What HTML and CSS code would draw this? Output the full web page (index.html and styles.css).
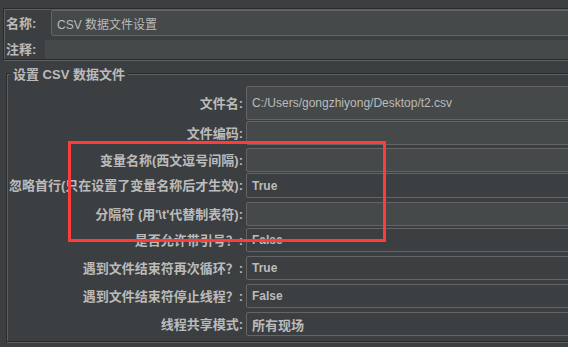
FILE: index.html
```html
<!DOCTYPE html>
<html lang="zh">
<head>
<meta charset="utf-8">
<title>CSV 数据文件设置</title>
<link rel="stylesheet" href="styles.css">
</head>
<body>
<div class="page">
  <div class="head">
    <div class="head-row name-row">
      <span class="head-lbl name-lbl">名称:</span>
      <div class="field text name-field">CSV 数据文件设置</div>
    </div>
    <div class="head-row note-row">
      <span class="head-lbl note-lbl">注释:</span>
      <div class="field note-field"></div>
    </div>
  </div>

  <div class="group">
    <div class="group-title">设置 CSV 数据文件</div>
    <div class="row r1"><span class="lbl">文件名:</span><div class="field text">C:/Users/gongzhiyong/Desktop/t2.csv</div></div>
    <div class="row r2"><span class="lbl">文件编码:</span><div class="field text"></div></div>
    <div class="row r3"><span class="lbl">变量名称(西文逗号间隔):</span><div class="field text"></div></div>
    <div class="row r4"><span class="lbl">忽略首行(只在设置了变量名称后才生效):</span><div class="field combo">True</div></div>
    <div class="row r5"><span class="lbl">分隔符 (用'\t'代替制表符):</span><div class="field text"></div></div>
    <div class="row r6"><span class="lbl">是否允许带引号？:</span><div class="field combo">False</div></div>
    <div class="row r7"><span class="lbl">遇到文件结束符再次循环？:</span><div class="field combo">True</div></div>
    <div class="row r8"><span class="lbl">遇到文件结束符停止线程？:</span><div class="field combo">False</div></div>
    <div class="row r9"><span class="lbl">线程共享模式:</span><div class="field combo cjk">所有现场</div></div>
  </div>

  <div class="mark"></div>
</div>
</body>
</html>
```

FILE: styles.css
```css
html, body {
  margin: 0;
  padding: 0;
  background: #3c3f41;
}

body {
  width: 568px;
  height: 347px;
  overflow: hidden;
  font-family: "Liberation Sans", "Noto Sans CJK SC", sans-serif;
  color: #bbbbbb;
}

.page {
  position: relative;
  width: 568px;
  height: 347px;
  overflow: hidden;
  padding-top: 8px;
  box-sizing: border-box;
}

/* etched boxes */
.head,
.group {
  border: 1px solid #2b2b2b;
  box-shadow: inset 1px 1px 0 #5e6060, 1px 1px 0 #5e6060;
  box-sizing: border-box;
  width: 640px;
}

.head {
  margin-left: 3px;
  height: 52px;
  padding: 1px 0 0 1px;
}

.head-row {
  display: flex;
  align-items: center;
}

.name-row {
  height: 26px;
}

.note-row {
  height: 19px;
  margin-top: 4px;
}

.head-lbl {
  font-size: 13px;
  font-weight: bold;
  line-height: 15px;
  padding-left: 1px;
  box-sizing: border-box;
  white-space: nowrap;
}

.name-lbl {
  flex: 0 0 46px;
}

.note-lbl {
  flex: 0 0 40px;
}

.field {
  box-sizing: border-box;
  flex: 0 0 auto;
  width: 580px;
  height: 100%;
  display: flex;
  align-items: center;
  padding-left: 5px;
  font-size: 12px;
  white-space: nowrap;
  color: #bbbbbb;
}

.text {
  background: #45494a;
  border: 1px solid #646464;
  border-radius: 2px;
}

.combo {
  background: #3c3f41;
  border: 1px solid #646464;
  border-radius: 2px;
  font-weight: bold;
}

.combo.cjk {
  font-size: 13px;
}

.note-field {
  background: #45494a;
}

/* group */
.group {
  margin: 13px 0 0 6px;
  padding: 0 0 5px 0;
}

.group-title {
  display: block;
  width: max-content;
  margin: -7px 0 0 3px;
  padding: 0 3px;
  background: #3c3f41;
  font-size: 13px;
  font-weight: bold;
  line-height: 15px;
}

.row {
  display: flex;
  align-items: center;
  height: 24px;
}

.lbl {
  flex: 0 0 236px;
  margin-right: 3px;
  text-align: right;
  font-size: 13px;
  font-weight: bold;
  line-height: 15px;
  white-space: nowrap;
}

.r1 { height: 34px; margin-top: 4px; }
.r2 { margin-top: 1px; }
.r3 { margin-top: 3px; }
.r4 { height: 25px; margin-top: 1px; }
.r5 { margin-top: 4px; }
.r6 { margin-top: 2px; }
.r7 { margin-top: 4px; }
.r8 { margin-top: 4px; }
.r9 { margin-top: 4px; }

/* red annotation rectangle drawn over the form */
.mark {
  position: absolute;
  left: 68px;
  top: 141px;
  width: 318px;
  height: 101px;
  box-sizing: border-box;
  border: 3px solid #ff3b3b;
}
```
